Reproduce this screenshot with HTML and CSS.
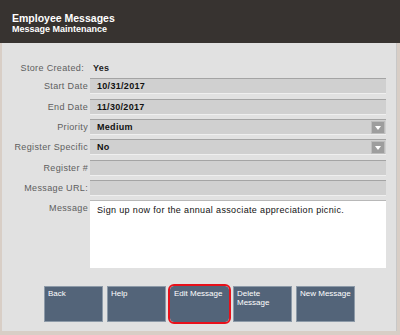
FILE: index.html
```html
<!DOCTYPE html>
<html>
<head>
<meta charset="utf-8">
<link rel="stylesheet" href="styles.css">
</head>
<body>
<div class="screen">
  <header class="hdr">
    <div class="t1">Employee Messages</div>
    <div class="t2">Message Maintenance</div>
  </header>
  <main class="body">
    <div class="form">
      <div class="lbl store">Store Created:</div><div class="val">Yes</div>
      <div class="lbl">Start Date</div><div class="fld">10/31/2017</div>
      <div class="lbl">End Date</div><div class="fld">11/30/2017</div>
      <div class="lbl">Priority</div><div class="fld sel">Medium<span class="dd"></span></div>
      <div class="lbl">Register Specific</div><div class="fld sel">No<span class="dd"></span></div>
      <div class="lbl">Register #</div><div class="fld"></div>
      <div class="lbl">Message URL:</div><div class="fld"></div>
      <div class="lbl">Message</div><div class="area">Sign up now for the annual associate appreciation picnic.</div>
    </div>
    <div class="btns">
      <div class="btn">Back</div>
      <div class="btn">Help</div>
      <div class="btn active">Edit Message</div>
      <div class="btn">Delete<br>Message</div>
      <div class="btn">New Message</div>
    </div>
  </main>
</div>
</body>
</html>
```
FILE: styles.css
```css
html, body { margin: 0; padding: 0; }
body { width: 400px; height: 335px; overflow: hidden; background: #e1e1e1; font-family: "Liberation Sans", Arial, sans-serif; }
.screen { width: 400px; height: 335px; display: flex; flex-direction: column; box-sizing: border-box; border-right: 3px solid #d8cec6; border-bottom: 4px solid #d8cec6; border-left: 2px solid #d8cec6; }
.hdr { height: 43px; background: #373330; color: #fff; padding: 12px 0 0 12px; box-sizing: border-box; margin-right: -3px; margin-left: -2px; }
.t1 { font-weight: bold; font-size: 10.5px; line-height: 12px; }
.t2 { font-weight: bold; font-size: 9px; line-height: 11px; }
.body { flex: 1; border-right: 1px solid #c8c8c8; }
.form { display: grid; grid-template-columns: 86px 296px; column-gap: 2px; row-gap: 4.33px; grid-template-rows: 11px repeat(6, 16px) 68px; padding-top: 20px; }
.lbl { text-align: right; font-size: 9px; letter-spacing: 0.35px; color: #5e5e5e; line-height: 16px; white-space: nowrap; }
.lbl.store { line-height: 11px; padding-right: 4px; }
.val { font-size: 9px; font-weight: bold; letter-spacing: 0.3px; color: #222; line-height: 11px; padding-left: 3px; }
.fld { background: #d0d0d0; border-top: 1px solid #a4a4a4; border-bottom: 1px solid #efefef; box-sizing: border-box; font-size: 9px; font-weight: bold; letter-spacing: 0.3px; color: #111; line-height: 14px; padding-left: 7px; position: relative; }
.dd { position: absolute; right: 1px; top: 1px; width: 14px; height: 13px; box-sizing: border-box; background: #9e9e9e; border: 1px solid #bdbdbd; }
.dd::after { content: ""; position: absolute; left: 3px; top: 4px; border-left: 3.5px solid transparent; border-right: 3.5px solid transparent; border-top: 4px solid #fff; }
.area { background: #fff; border-top: 1px solid #b8b8b8; box-sizing: border-box; font-size: 9px; letter-spacing: 0.35px; color: #111; padding: 3px 7px; line-height: 12px; }
.btns { display: flex; gap: 4px; padding: 18px 0 0 42px; }
.btn { width: 59px; height: 36px; box-sizing: border-box; background: #536479; border: 1px solid #8d9aa8; color: #fff; font-size: 8px; padding: 2px 3px; line-height: 9px; white-space: nowrap; }
.btn.active { outline: 2px solid #e8101a; outline-offset: 0; border-radius: 4px; border-color: #536479; }
```
